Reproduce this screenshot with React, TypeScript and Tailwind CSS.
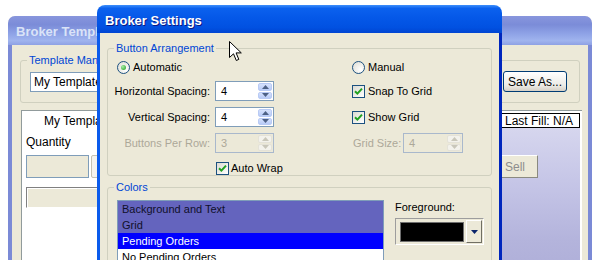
import React from "react";

function Radio({ checked }: { checked?: boolean }) {
  return (
    <span className="flex h-[13px] w-[13px] shrink-0 items-center justify-center rounded-full border border-[#1c5180] bg-[radial-gradient(circle_at_70%_70%,#ffffff,#dcdbd2)]">
      {checked && (
        <span className="h-[5px] w-[5px] rounded-full bg-[radial-gradient(circle_at_35%_35%,#a6eea6,#1d9a1d)]" />
      )}
    </span>
  );
}

function Check() {
  return (
    <span className="flex h-[13px] w-[13px] shrink-0 items-center justify-center border border-[#1c5180] bg-[linear-gradient(135deg,#dcdbd2,#ffffff)]">
      <svg width="9" height="9" viewBox="0 0 9 9">
        <path d="M1 4.2 L3.4 6.6 L8 1.6" stroke="#21a121" strokeWidth="2" fill="none" />
      </svg>
    </span>
  );
}

function SpinBtn({ up, disabled }: { up?: boolean; disabled?: boolean }) {
  return (
    <div
      className={`flex flex-1 items-center justify-center rounded-[2px] border ${
        disabled
          ? "border-[#e4e2d8] bg-[#f3f2ec]"
          : "border-[#b9cbf5] bg-[linear-gradient(to_bottom,#d5e1fc,#b8cbf7)]"
      }`}
    >
      <svg width="7" height="4" viewBox="0 0 7 4">
        <path
          d={up ? "M0 4 L3.5 0 L7 4Z" : "M0 0 L3.5 4 L7 0Z"}
          fill={disabled ? "#c9c7ba" : "#4d6185"}
        />
      </svg>
    </div>
  );
}

function SpinBox({ value, disabled, w = "w-[59px]" }: { value: string; disabled?: boolean; w?: string }) {
  return (
    <div
      className={`flex h-[20px] ${w} items-center border ${
        disabled ? "border-[#a9b8cc] bg-[#ece9d8] text-[#aca899]" : "border-[#7f9db9] bg-white text-black"
      }`}
    >
      <span className="flex-1 pl-[5px]">{value}</span>
      <div className="flex h-full w-[16px] flex-col gap-[1px] p-[1px]">
        <SpinBtn up disabled={disabled} />
        <SpinBtn disabled={disabled} />
      </div>
    </div>
  );
}

function Legend({ children }: { children: React.ReactNode }) {
  return <legend className="ml-[6px] px-[2px] leading-[14px] text-[#0046d5]">{children}</legend>;
}

function BackWindow() {
  return (
    <div className="absolute left-[8px] top-[16px] flex h-[260px] w-[584px] flex-col rounded-t-[7px] bg-[#ece9d8]">
      <div className="flex h-[29px] shrink-0 items-center rounded-t-[7px] bg-[linear-gradient(to_bottom,#8896dd_0%,#7b8cd8_30%,#8ea2e6_60%,#a0b4ee_85%,#8ea1e4_100%)] pl-[8px] pt-[2px] text-[13px] font-bold text-[#dae3f7]">
        Broker Template Manager
      </div>
      <div className="flex min-h-0 flex-1 flex-col border-x-4 border-[#7b8ad6]">
        <fieldset className="mx-[8px] mt-[8px] shrink-0 rounded-[3px] border border-[#d0d0bf] pb-[10px]">
          <Legend>Template Manager</Legend>
          <div className="mt-[4px] flex items-center pl-[9px] pr-[12px]">
            <div className="flex h-[20px] flex-1 items-center border border-[#7f9db9] bg-white pl-[3px] text-[12px]">
              My Template
            </div>
            <div className="ml-[6px] flex h-[21px] w-[64px] items-center justify-center rounded-[3px] border border-[#003c74] bg-[linear-gradient(to_bottom,#ffffff,#ecebe6_70%,#d6d0c5)] text-[12px]">
              Save As...
            </div>
          </div>
        </fieldset>
        <div className="ml-[9px] mr-[6px] mt-[7px] flex flex-1 border-l border-t border-[#919b9c] bg-white">
          <div className="flex flex-1 flex-col text-[12px]">
            <div className="flex h-[20px] items-center pl-[22px]">My Template</div>
            <div className="mt-[3px] flex h-[16px] items-center pl-[4px]">Quantity</div>
            <div className="mt-[5px] flex gap-[2px] pl-[4px]">
              <div className="h-[23px] w-[63px] border border-[#7f9db9] bg-[#ece9d8]" />
              <div className="h-[23px] w-[60px] rounded-[2px] border border-[#c5c2b2] bg-[#f4f3ee]" />
            </div>
            <div className="ml-[4px] mt-[9px] h-[21px] w-[200px] border border-b-white border-l-[#808080] border-r-white border-t-[#808080] bg-[#ece9d8] shadow-[inset_1px_1px_0_#ffffff]" />
          </div>
          <div className="mr-[2px] flex w-[90px] flex-col">
            <div className="mt-[2px] flex h-[15px] items-center justify-end border border-black bg-white pr-[6px] text-[12px]">
              Last Fill: N/A
            </div>
            <div className="flex-1 bg-[linear-gradient(to_bottom,#d6d6ee,#c4c4e6_40%,#b4b4dc_75%,#aeaed8)]">
              <div className="ml-[2px] mt-[27px] flex h-[23px] w-[46px] items-center justify-center border border-b-[#8a8a80] border-l-white border-r-[#8a8a80] border-t-white bg-[#ece9d8] text-[12px] text-[#8d8d8d]">
                Sell
              </div>
            </div>
          </div>
        </div>
      </div>
    </div>
  );
}

function Dialog() {
  return (
    <div className="absolute left-[97px] top-[5px] flex h-[300px] w-[405px] flex-col rounded-t-[8px]">
      <div className="flex h-[28px] shrink-0 items-center rounded-t-[8px] bg-[linear-gradient(to_bottom,#3d8ffb_0%,#0b61ee_12%,#0558e8_45%,#0151e1_80%,#0045d2_100%)] pl-[8px] pt-[3px] text-[13px] font-bold text-white [text-shadow:1px_1px_0_#0a1883]">
        Broker Settings
      </div>
      <div className="flex flex-1 flex-col border-l-[3px] border-r-[3px] border-l-[#0b5bec] border-r-[#0026bd] bg-[#ece9d8]">
        <fieldset className="mx-[7px] mt-[8px] shrink-0 rounded-[3px] border border-[#d0d0bf]">
          <Legend>Button Arrangement</Legend>
          <div className="flex h-[23px] items-center pt-[2px]">
            <div className="flex w-[244px] items-center gap-[3px] pl-[9px]">
              <Radio checked />
              <span>Automatic</span>
            </div>
            <div className="flex items-center gap-[3px]">
              <Radio />
              <span>Manual</span>
            </div>
          </div>
          <div className="flex h-[26px] items-center">
            <div className="flex w-[244px] items-center gap-[5px]">
              <span className="w-[102px] text-right">Horizontal Spacing:</span>
              <SpinBox value="4" />
            </div>
            <div className="flex items-center gap-[3px]">
              <Check />
              <span>Snap To Grid</span>
            </div>
          </div>
          <div className="flex h-[26px] items-center">
            <div className="flex w-[244px] items-center gap-[5px]">
              <span className="w-[102px] text-right">Vertical Spacing:</span>
              <SpinBox value="4" />
            </div>
            <div className="flex items-center gap-[3px]">
              <Check />
              <span>Show Grid</span>
            </div>
          </div>
          <div className="flex h-[26px] items-center">
            <div className="flex w-[244px] items-center gap-[5px]">
              <span className="w-[102px] text-right text-[#aca899]">Buttons Per Row:</span>
              <SpinBox value="3" disabled />
            </div>
            <div className="flex items-center">
              <span className="w-[51px] pl-[1px] text-[#aca899]">Grid Size:</span>
              <SpinBox value="4" disabled w="w-[60px]" />
            </div>
          </div>
          <div className="flex h-[19px] items-center pl-[108px] pt-[5px]">
            <div className="flex items-center gap-[2px]">
              <Check />
              <span>Auto Wrap</span>
            </div>
          </div>
        </fieldset>
        <fieldset className="mx-[7px] mt-[4px] flex-1 rounded-[3px] border border-[#d0d0bf]">
          <Legend>Colors</Legend>
          <div className="flex pl-[9px] pt-[6px]">
            <div className="flex h-[80px] w-[267px] flex-col border border-[#7f9db9] bg-white">
              <div className="flex h-[16px] items-center bg-[#6464be] pl-[4px] text-[#10102a]">Background and Text</div>
              <div className="flex h-[16px] items-center bg-[#6464be] pl-[4px] text-[#10102a]">Grid</div>
              <div className="flex h-[16px] items-center bg-[#0000ff] pl-[4px] text-white">Pending Orders</div>
              <div className="flex h-[16px] items-center pl-[4px]">No Pending Orders</div>
            </div>
            <div className="ml-[11px] flex flex-col">
              <div className="flex h-[14px] items-center">Foreground:</div>
              <div className="mt-[4px] flex h-[27px] w-[89px] items-center border border-b-white border-l-[#9d9d9d] border-r-white border-t-[#9d9d9d] bg-[#ece9d8] pl-[4px] pr-[1px]">
                <div className="h-[20px] w-[64px] border border-[#6f6f6f] bg-black" />
                <div className="ml-auto flex h-[23px] w-[16px] items-center justify-center border border-b-[#716f64] border-l-white border-r-[#716f64] border-t-white bg-[#ece9d8]">
                  <svg width="7" height="4" viewBox="0 0 7 4">
                    <path d="M0 0 L3.5 4 L7 0Z" fill="#0a246a" />
                  </svg>
                </div>
              </div>
            </div>
          </div>
        </fieldset>
      </div>
    </div>
  );
}

function Cursor() {
  return (
    <svg className="absolute left-[229px] top-[41px]" width="13" height="21" viewBox="0 0 13 21">
      <path
        d="M0.5 0.5 L0.5 16.5 L4.5 12.8 L7.3 19.5 L9.8 18.4 L7.1 11.9 L12.3 11.9 Z"
        fill="#ffffff"
        stroke="#000000"
        strokeWidth="1"
        strokeLinejoin="miter"
      />
    </svg>
  );
}

export default function App() {
  return (
    <div className="h-[267px] w-[609px] overflow-hidden bg-white font-['Liberation_Sans',Arial,sans-serif] text-[11px] text-black">
      <div className="relative h-[260px] w-[598px] overflow-hidden">
        <BackWindow />
        <Dialog />
        <Cursor />
      </div>
    </div>
  );
}
